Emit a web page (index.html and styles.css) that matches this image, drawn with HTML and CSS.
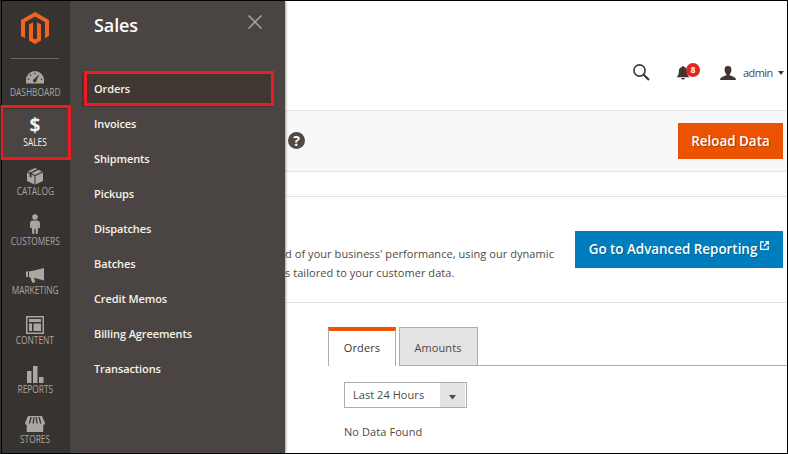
FILE: index.html
```html
<!DOCTYPE html>
<html lang="en">
<head>
<meta charset="utf-8">
<title>Dashboard</title>
<link rel="stylesheet" href="styles.css">
</head>
<body>
<div class="app">
  <nav class="nav">
    <div class="logo"><svg width="28" height="32" viewBox="0 0 28 32"><path fill="#f26322" d="M14 0 28 8v16l-4 2.300V10.300L14 4.600 4 10.300v16L0 24V8zM8 12.600l4-2.300V26.300l2 1.200 2-1.200V10.300l4 2.300v16L14 32l-6-3.400z"/></svg></div>
    <a class="item"><span class="icon"><svg width="18" height="13" viewBox="0 0 18 13"><path fill="#aaa6a0" d="M0 12.500V9a9 9 0 0 1 18 0v3.500z"/><g fill="#373330"><circle cx="9" cy="2.500" r=".8"/><circle cx="4.500" cy="4.200" r=".8"/><circle cx="2.500" cy="8.300" r=".8"/><circle cx="15.500" cy="8.300" r=".8"/><path d="m13.500 3-3 6.200a1.800 1.800 0 1 1-2.300-1.300z"/></g></svg></span><span class="label">DASHBOARD</span></a>
    <a class="item active"><span class="icon dollar">$</span><span class="label">SALES</span></a>
    <a class="item"><span class="icon"><svg width="16" height="17" viewBox="0 0 16 17"><g fill="#aaa6a0"><path d="m8 0 2.200 1-7 3.500L.8 3.500zM11.500 1.700l3.700 1.800L8 7 4.500 5.200zM0 4.500l2.600 1.200v3l1.900 1V6.600l3 1.500V16.500L0 13zM16 4.500V13l-7.500 3.500V8.100z"/></g></svg></span><span class="label">CATALOG</span></a>
    <a class="item"><span class="icon person"><svg width="10" height="20" viewBox="0 0 10 20"><g fill="#aaa6a0"><circle cx="5" cy="3" r="2.800"/><path d="M2 6.500h6q2 .5 2 3V14H8.500v-3.500L7.600 20H5.700V15H4.300v5H2.400l-.9-9.500V14H0V9.500q0-2.500 2-3z"/></g></svg></span><span class="label">CUSTOMERS</span></a>
    <a class="item"><span class="icon"><svg width="18" height="15" viewBox="0 0 18 15"><path fill="#aaa6a0" d="M6 3 18 0v12.500L8 9.700l1.400 4.500-3.200.5L4.300 9.300H3V3.300zM0 4.300q0-1.100 2-1.100v6Q0 9.200 0 8z"/></svg></span><span class="label">MARKETING</span></a>
    <a class="item"><span class="icon"><svg width="18" height="18" viewBox="0 0 18 18"><path fill="#aaa6a0" fill-rule="evenodd" d="M0 0h18v18H0zM1.500 1.500v15h15v-15zM3 3h12v3H3zM3 7.500h3V15H3zM7.500 7.500H15V15H7.500z"/></svg></span><span class="label">CONTENT</span></a>
    <a class="item"><span class="icon"><svg width="17" height="17" viewBox="0 0 17 17"><path fill="#aaa6a0" d="M0 5h4.500v12H0zM6 0h4.500v17H6zM12 11h4.500v6H12z"/></svg></span><span class="label">REPORTS</span></a>
    <a class="item"><span class="icon"><svg width="20" height="16" viewBox="0 0 20 16"><path fill="#aaa6a0" d="M3 0h14l3 7q-.2 2-1.800 2v7H1.700V9Q.2 9 0 7z"/><path stroke="#373330" fill="none" d="M6.200 1 4.400 7.500M9 1l-.8 6.500M11.200 1l.8 6.500M14 1l1.800 6.500" stroke-width="1.300"/></svg></span><span class="label">STORES</span></a>
    <div class="mark mark-nav"></div>
  </nav>

  <aside class="menu">
    <header class="menu-head"><h1>Sales</h1><svg width="14" height="14" viewBox="0 0 14 14"><path stroke="#aaa6a0" stroke-width="1.500" fill="none" d="m.5.5 13 13m0-13-13 13"/></svg></header>
    <ul>
      <li class="current"><span>Orders</span></li>
      <li><span>Invoices</span></li>
      <li><span>Shipments</span></li>
      <li><span>Pickups</span></li>
      <li><span>Dispatches</span></li>
      <li><span>Batches</span></li>
      <li><span>Credit Memos</span></li>
      <li><span>Billing Agreements</span></li>
      <li><span>Transactions</span></li>
    </ul>
    <div class="mark mark-menu"></div>
  </aside>

  <main class="main">
    <header class="top">
      <svg class="search" width="17" height="17" viewBox="0 0 17 17"><circle cx="6.500" cy="6.500" r="5.600" fill="none" stroke="#41362f" stroke-width="1.600"/><path d="m10.500 10.500 5.500 5.500" stroke="#41362f" stroke-width="2.200"/></svg>
      <div class="bell"><svg width="12" height="14" viewBox="0 0 12 14"><path fill="#41362f" d="M6 0q1 0 1 1 3.200.7 3.200 4.500 0 4 1.800 5v.8H0v-.8q1.800-1 1.800-5Q1.800 1.700 5 1q0-1 1-1zM4 12h4q-.3 1.500-2 1.500T4 12z"/></svg><span class="badge">8</span></div>
      <svg class="user" width="16" height="14" viewBox="0 0 16 14"><path fill="#41362f" d="M8 0c2.500 0 3.600 1.600 3.400 4-.1 2-.8 3.200-1.700 4v1.300L14 11q2 .8 2 3H0q0-2.200 2-3l4.300-1.700V8C5.400 7.200 4.700 6 4.600 4 4.400 1.600 5.500 0 8 0z"/></svg>
      <span class="name">admin</span>
      <svg class="caret" width="6" height="4" viewBox="0 0 6 4"><path fill="#41362f" d="M0 0h6L3 4z"/></svg>
    </header>
    <section class="actions">
      <span class="help">?</span>
      <button class="btn reload"><span>Reload Data</span></button>
    </section>
    <section class="report">
      <p><span>d of your business' performance, using our dynamic</span><span>s tailored to your customer data.</span></p>
      <button class="btn advanced"><span>Go to Advanced Reporting</span><svg width="9" height="9" viewBox="0 0 9 9"><path fill="none" stroke="#fff" stroke-width="1.300" d="M4 .8H.7v7.500h7.500V5M5.300.7h3v3M8 1 3.800 5.200"/></svg></button>
    </section>
    <section class="data">
      <div class="tabs"><div class="tab on"><span>Orders</span></div><div class="tab off"><span>Amounts</span></div><div class="rest"></div></div>
      <div class="select"><span>Last 24 Hours</span><i><svg width="7" height="5" viewBox="0 0 7 5"><path fill="#514943" d="M0 0h7L3.500 4.500z"/></svg></i></div>
      <p class="empty">No Data Found</p>
    </section>
  </main>
</div>
</body>
</html>
```
FILE: styles.css
```css
* { box-sizing: border-box; }
body { margin: 0; font-family: "Open Sans", sans-serif; color: #514943; font-size: 11px; }
h1, p, ul { margin: 0; padding: 0; }
svg { display: block; flex: none; }
.app { width: 788px; height: 454px; border: 1px solid #000; border-left-color: #373330; display: flex; overflow: hidden; background: #fff; }

.nav { position: relative; width: 69px; flex: none; background: #373330; border-left: 1px solid #000; z-index: 2; }
.logo { height: 58px; width: 48px; margin: 0 0 0 9px; padding: 11px 0 0 10px; border-bottom: 1px solid #736963; }
.item { height: 49.550px; padding-right: 2px; display: flex; flex-direction: column; align-items: center; }
.icon { height: 20px; margin-top: 8px; display: flex; align-items: center; justify-content: center; }
.label { height: 12px; line-height: 12px; font-size: 10px; color: #aaa6a0; white-space: nowrap; margin-top: -1px; transform: scaleX(.835); }
.active { background: #4a4542; }
.active .label { color: #f7f3eb; }
.dollar { color: #f7f3eb; font: bold 19px/20px "Open Sans", sans-serif; height: 16px; margin: 8px 0 4px; }
.person { margin: 6px 0 2px; }
.mark { position: absolute; border: 3px solid #ed1c24; }
.mark-nav { left: -2px; top: 104px; width: 71px; height: 55px; }

.menu { position: relative; width: 215px; flex: none; background: #4a4542; color: #f7f3eb; z-index: 1; box-shadow: 0 0 3px #000a; }
.menu-head { height: 71px; padding: 14px 23px 0 24px; display: flex; justify-content: space-between; }
.menu h1 { font-size: 18px; line-height: 20px; font-weight: 600; color: #fff; letter-spacing: -.1px; }
.menu ul { list-style: none; padding-left: 12px; }
.menu li { height: 35px; line-height: 34px; padding-left: 12px; font-weight: 600; letter-spacing: -.1px; white-space: nowrap; }
.menu .current { background: #403731; margin-right: 12px; }
.mark-menu { left: 14px; top: 70px; width: 190px; height: 35px; }

.main { flex: 1; min-width: 0; }
.top { height: 110px; border-bottom: 1px solid #e3e3e3; display: flex; align-items: center; padding: 34px 3px 0 348px; }
.bell { position: relative; margin-left: 27px; }
.badge { position: absolute; left: 9px; top: -3px; width: 14px; height: 14px; border-radius: 7px; background: #e22626; color: #fff; font-size: 8px; line-height: 13px; font-weight: 700; text-align: center; }
.user { margin-left: 31px; }
.name { margin-left: 7px; line-height: 16px; width: 30px; letter-spacing: -.6px; }
.caret { margin-left: 5px; }
.actions { height: 61px; background: #f8f8f8; border-bottom: 1px solid #e3e3e3; display: flex; align-items: center; justify-content: space-between; padding: 0 4px 0 3px; }
.help { width: 17px; height: 17px; margin-top: -2px; border-radius: 50%; background: #514943; color: #fff; font-size: 14px; line-height: 17px; font-weight: 700; text-align: center; }
.btn { border: 0; color: #fff; font-family: inherit; font-weight: 600; font-size: 13.400px; line-height: 20px; padding: 0; display: flex; justify-content: center; white-space: nowrap; text-shadow: 1px 1px 0 #0004; }
.reload { width: 105px; height: 36px; background: #eb5202; align-items: center; }
.report { height: 107px; margin-top: 24px; border: solid #e3e3e3; border-width: 1px 0; display: flex; justify-content: space-between; padding: 34px 4px 0 0; }
.report p { padding-top: 13px; }
.report p span { display: block; line-height: 19px; letter-spacing: .06px; white-space: nowrap; }
.advanced { width: 208px; height: 37px; background: #007dbd; padding: 8px 0 0; gap: 3px; }
.advanced svg { margin-top: 2px; }
.data { padding: 24px 0 0 43px; }
.tabs { display: flex; height: 39px; }
.tab { border: 1px solid #adadad; display: flex; justify-content: center; align-items: center; }
.on { width: 68px; border-bottom: 0; border-top: 4px solid #eb5202; color: #41362f; font-weight: 500; padding-bottom: 2px; letter-spacing: .1px; }
.off { width: 79px; background: #e3e3e3; margin-left: 3px; padding: 2px 1px 0 0; letter-spacing: .1px; }
.rest { flex: 1; border-bottom: 1px solid #adadad; }
.select { margin: 16px 0 0 16px; width: 123px; height: 26px; border: 1px solid #adadad; display: flex; justify-content: space-between; align-items: center; padding: 0 1px 0 8px; }
.select span { margin-top: -2px; letter-spacing: .05px; }
.select i { width: 25px; height: 24px; background: #e3e3e3; display: flex; align-items: center; justify-content: center; padding-top: 4px; }
.empty { margin: 15px 0 0 16px; line-height: 18px; letter-spacing: .08px; }
```
